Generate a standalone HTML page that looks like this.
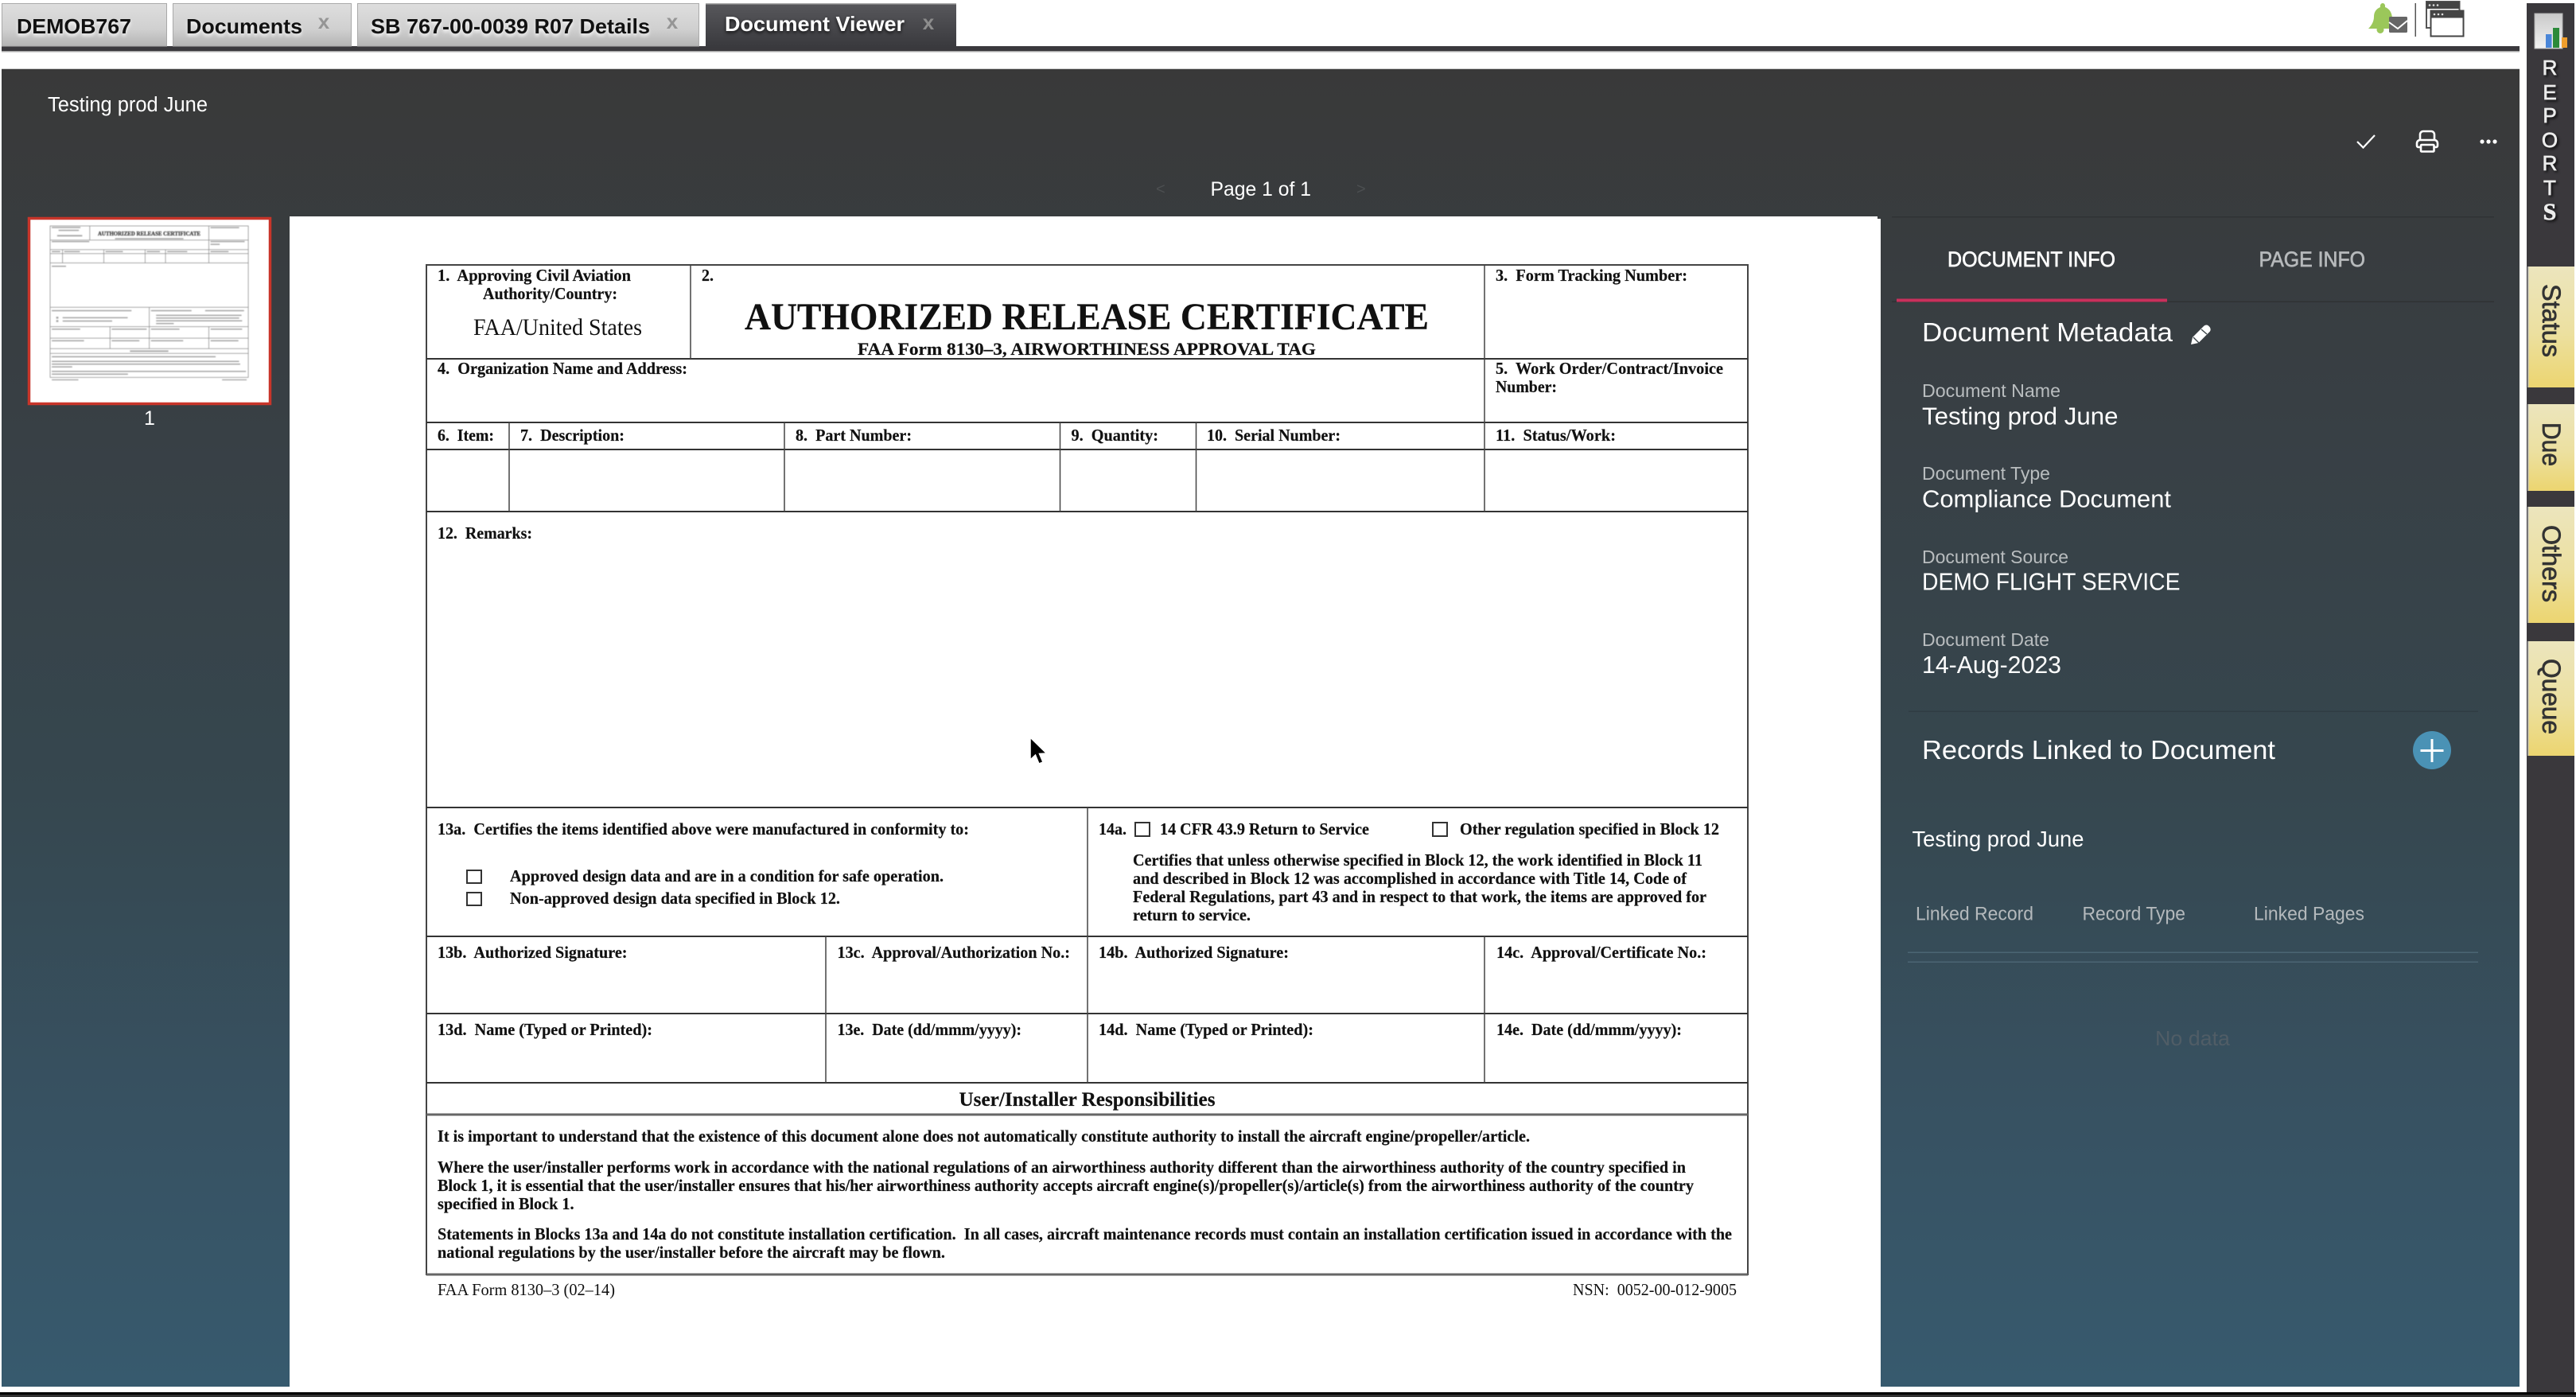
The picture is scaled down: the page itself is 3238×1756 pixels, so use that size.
<!DOCTYPE html>
<html lang="en">
<head>
<meta charset="utf-8">
<title>Document Viewer</title>
<style>
html,body{margin:0;padding:0;background:#fff;width:3238px;height:1756px;overflow:hidden}
svg{display:block;position:absolute;left:0;top:0}
.s{font-family:"Liberation Sans",Arial,sans-serif}
.f text{font-family:"Liberation Serif","Times New Roman",serif;font-weight:bold;font-size:21px;fill:#111;stroke:#111;stroke-width:.2px;white-space:pre}
.f .n{font-weight:normal;stroke-width:0}
.p text{font-family:"Liberation Sans",Arial,sans-serif;fill:#fff}
.l{font-size:23.5px;fill:#b9bdbf !important}
.v{font-size:31px}
.h{font-size:24.5px;fill:#b4b9bc !important}
</style>
</head>
<body>
<svg width="3238" height="1756" viewBox="0 0 3238 1756" xmlns="http://www.w3.org/2000/svg">
<defs>
<linearGradient id="bg" x1="0" y1="87" x2="0" y2="1743" gradientUnits="userSpaceOnUse">
<stop offset="0" stop-color="#393939"/>
<stop offset=".25" stop-color="#383f44"/>
<stop offset=".55" stop-color="#36474f"/>
<stop offset=".78" stop-color="#375161"/>
<stop offset="1" stop-color="#375a6e"/>
</linearGradient>
<linearGradient id="ti" x1="0" y1="0" x2="0" y2="1"><stop offset="0" stop-color="#dedede"/><stop offset=".6" stop-color="#d0d0d0"/><stop offset="1" stop-color="#b4b4b4"/></linearGradient>
<linearGradient id="ta" x1="0" y1="0" x2="0" y2="1"><stop offset="0" stop-color="#58585c"/><stop offset="1" stop-color="#39393d"/></linearGradient>
<linearGradient id="y" x1="0" y1="0" x2="0" y2="1"><stop offset="0" stop-color="#ece5bd"/><stop offset=".55" stop-color="#ece0a0"/><stop offset="1" stop-color="#ecd570"/></linearGradient>
<linearGradient id="cb" x1="0" y1="0" x2="0" y2="1"><stop offset="0" stop-color="#c9c9c9"/><stop offset="1" stop-color="#f2f2f2"/></linearGradient>
<filter id="blur" x="-5%" y="-5%" width="110%" height="110%"><feGaussianBlur stdDeviation=".65"/></filter>
</defs>

<!-- top tabs -->
<rect x="2" y="58" width="3165" height="6" fill="#3a393d"/>
<rect x="2" y="64" width="3165" height="1.5" fill="#a8a8a8"/>
<g stroke="#a9a9a9" stroke-width="1">
<rect x="2.5" y="4.5" width="207" height="53.5" fill="url(#ti)"/>
<rect x="217.5" y="4.5" width="224" height="53.5" fill="url(#ti)"/>
<rect x="449.5" y="4.5" width="429" height="53.5" fill="url(#ti)"/>
</g>
<rect x="887" y="4" width="315" height="56" fill="url(#ta)"/>
<rect x="887" y="4" width="315" height="1.5" fill="#a9a9a9"/>
<g class="s" font-weight="bold" font-size="26" fill="#111" style="filter:drop-shadow(0 3px 2px rgba(255,255,255,.85))">
<text x="21" y="42" textLength="144" lengthAdjust="spacingAndGlyphs">DEMOB767</text>
<text x="234" y="42" textLength="146" lengthAdjust="spacingAndGlyphs">Documents</text>
<text x="466" y="42" textLength="351" lengthAdjust="spacingAndGlyphs">SB 767-00-0039 R07 Details</text>
</g>
<text class="s" x="911" y="39" font-weight="bold" font-size="26" fill="#fff" textLength="226" lengthAdjust="spacingAndGlyphs" style="filter:drop-shadow(0 2px 2px rgba(0,0,0,.8))">Document Viewer</text>
<g class="s" font-weight="bold" font-size="26" fill="#959595" text-anchor="middle">
<text x="407" y="36">x</text>
<text x="845" y="36">x</text>
<text x="1167" y="37" fill="#8d8d8d">x</text>
</g>

<!-- top right icons -->
<path d="M2995 4c2 0 3.500 2 3 5 6 2 9 8 9 15v12h-30c4-4 7-9 7-15 0-6 3-10 8-12-.5-3 1-5 3-5z" fill="#9bc75a"/>
<circle cx="2992" cy="37.500" r="4.500" fill="#9bc75a"/>
<rect x="3003" y="21" width="23" height="20" rx="1.5" fill="#666"/>
<path d="M3003 28l11 8 12-10" fill="none" stroke="#fff" stroke-width="2"/>
<rect x="3035.5" y="4" width="1.5" height="42" fill="#555"/>
<rect x="3050" y="2" width="41.5" height="33" fill="#fff" stroke="#555" stroke-width="2"/>
<rect x="3050" y="2" width="41.5" height="9" fill="#444"/>
<rect x="3055.5" y="13.5" width="41" height="32" fill="#fff" stroke="#444" stroke-width="2"/>
<rect x="3055.5" y="13.5" width="41" height="9" fill="#444"/>
<g fill="#ddd"><circle cx="3054" cy="6.5" r="1.3"/><circle cx="3059" cy="6.5" r="1.3"/><circle cx="3064" cy="6.5" r="1.3"/><circle cx="3060" cy="18" r="1.3"/><circle cx="3065" cy="18" r="1.3"/><circle cx="3070" cy="18" r="1.3"/></g>

<!-- main panel -->
<rect x="2" y="86" width="3165" height="1" fill="#c8c8c8"/>
<rect x="2" y="87" width="3165" height="1656" fill="url(#bg)"/>
<rect x="364" y="272" width="1996" height="1478" fill="#fff"/>
<rect x="364" y="275" width="2000" height="1475" fill="#fff"/>
<rect x="2" y="1743" width="362" height="7" fill="#fff"/>
<rect x="2378" y="272" width="757" height="1.5" fill="#2f3234"/>
<rect x="2378" y="378.5" width="757" height="1.5" fill="#2f3234"/>
<rect x="2384" y="375.5" width="340" height="4" fill="#c9305c"/>

<g class="p">
<text x="60" y="140" font-size="25.500" textLength="201" lengthAdjust="spacingAndGlyphs">Testing prod June</text>
<text x="1521.500" y="246" font-size="25" textLength="126.500" lengthAdjust="spacingAndGlyphs">Page 1 of 1</text>
<text x="1453" y="244" font-size="20" style="fill:#4c4f51">&lt;</text>
<text x="1705" y="244" font-size="20" style="fill:#4c4f51">&gt;</text>
<text x="188" y="534" font-size="25" text-anchor="middle">1</text>
</g>

<!-- toolbar icons -->
<path d="M2963 178l7.5 7.5L2985 170" fill="none" stroke="#fff" stroke-width="2.2"/>
<g fill="none" stroke="#fff" stroke-width="2.6">
<path d="M3042 176v-7a4 4 0 0 1 4-4h10a4 4 0 0 1 4 4v7"/>
<path d="M3042 185h-2a2 2 0 0 1-2-2v-3a4 4 0 0 1 4-4h18a4 4 0 0 1 4 4v3a2 2 0 0 1-2 2h-2"/>
<rect x="3043" y="182" width="16.5" height="8.5" rx="1"/>
</g>
<g fill="#fff"><circle cx="3120" cy="178" r="2.600"/><circle cx="3128" cy="178" r="2.600"/><circle cx="3136" cy="178" r="2.600"/></g>

<!-- right sidebar -->
<rect x="3176" y="4" width="60" height="1746" fill="#3a383c"/>
<rect x="3186" y="17" width="35" height="44" fill="url(#cb)" stroke="#b0b0b0" stroke-width="1"/>
<rect x="3200" y="43" width="7.5" height="17" fill="#4a86d8"/>
<rect x="3209" y="35" width="8" height="25" fill="#2c8a3a"/>
<rect x="3220" y="47" width="7" height="13" fill="#ef9d2c"/>
<g class="s" font-size="26" fill="#ececec" stroke="#ececec" stroke-width=".7" text-anchor="middle" style="filter:drop-shadow(2px 2px 1.5px rgba(0,0,0,.75))">
<text x="3205" y="94">R</text>
<text x="3205" y="125">E</text>
<text x="3205" y="154">P</text>
<text x="3205" y="185">O</text>
<text x="3205" y="214">R</text>
<text x="3205" y="245">T</text>
<text x="3205" y="276" font-weight="bold" style="font-family:'Liberation Serif',serif" font-size="30">S</text>
</g>
<g>
<rect x="3177" y="335" width="59" height="152" fill="url(#y)"/>
<rect x="3177" y="508" width="59" height="109" fill="url(#y)"/>
<rect x="3177" y="637" width="59" height="146" fill="url(#y)"/>
<rect x="3177" y="806" width="59" height="144" fill="url(#y)"/>
<rect x="3177" y="335" width="1.5" height="152" fill="#aaa"/>
<rect x="3177" y="508" width="1.5" height="109" fill="#aaa"/>
<rect x="3177" y="637" width="1.5" height="146" fill="#aaa"/>
<rect x="3177" y="806" width="1.5" height="144" fill="#aaa"/>
</g>
<g class="s" font-size="32" fill="#333" stroke="#333" stroke-width=".7">
<text x="3196" y="357" transform="rotate(90 3196 357)" textLength="92" lengthAdjust="spacingAndGlyphs">Status</text>
<text x="3196" y="531" transform="rotate(90 3196 531)" textLength="55" lengthAdjust="spacingAndGlyphs">Due</text>
<text x="3196" y="660" transform="rotate(90 3196 660)" textLength="97" lengthAdjust="spacingAndGlyphs">Others</text>
<text x="3196" y="828" transform="rotate(90 3196 828)" textLength="95" lengthAdjust="spacingAndGlyphs">Queue</text>
</g>

<!-- thumbnail -->
<rect x="36.5" y="274.5" width="303" height="233" fill="#fff" stroke="#c8352a" stroke-width="3.5"/>
<g filter="url(#blur)">
<g transform="translate(63 284) scale(.15) translate(-536 -333)" fill="none" stroke="#8a8a8a" stroke-width="5">
<rect x="536" y="333" width="1661" height="1269"/>
<path d="M536 451H2197M536 531H2197M536 565H2197M536 643H2197M536 1015H2197M536 1177H2197M536 1274H2197M536 1361H2197M536 1401H2197M868 333V451M1866 333V643M640 531V643M986 531V643M1332 531V643M1503 531V643M1367 1015V1361M1038 1177V1361M1866 1177V1361"/>
<g stroke="none" fill="#a4a4a4">
<rect x="550" y="341" width="240" height="10"/><rect x="607" y="365" width="170" height="10"/><rect x="595" y="409" width="210" height="12"/>
<rect x="550" y="459" width="314" height="10"/><rect x="1880" y="342" width="240" height="10"/><rect x="1880" y="459" width="286" height="10"/><rect x="1880" y="482" width="77" height="10"/>
<rect x="550" y="543" width="71" height="10"/><rect x="654" y="543" width="131" height="10"/><rect x="1000" y="543" width="146" height="10"/><rect x="1346" y="543" width="110" height="10"/><rect x="1517" y="543" width="168" height="10"/><rect x="1880" y="543" width="151" height="10"/>
<rect x="550" y="666" width="119" height="10"/><rect x="550" y="1038" width="668" height="10"/><rect x="641" y="1097" width="545" height="10"/><rect x="641" y="1125" width="415" height="10"/><rect x="587" y="1094" width="18" height="16"/><rect x="587" y="1122" width="18" height="16"/>
<rect x="1381" y="1038" width="340" height="10"/><rect x="1835" y="1038" width="326" height="10"/><rect x="1424" y="1077" width="716" height="10"/><rect x="1424" y="1100" width="696" height="10"/><rect x="1424" y="1123" width="721" height="10"/><rect x="1424" y="1146" width="148" height="10"/>
<rect x="550" y="1193" width="238" height="10"/><rect x="1052" y="1193" width="293" height="10"/><rect x="1381" y="1193" width="239" height="10"/><rect x="1881" y="1193" width="264" height="10"/>
<rect x="550" y="1290" width="270" height="10"/><rect x="1052" y="1290" width="232" height="10"/><rect x="1381" y="1290" width="270" height="10"/><rect x="1881" y="1290" width="233" height="10"/>
<rect x="1205" y="1376" width="322" height="12"/><rect x="550" y="1424" width="1373" height="10"/><rect x="550" y="1463" width="1569" height="10"/><rect x="550" y="1486" width="1579" height="10"/><rect x="550" y="1509" width="171" height="10"/><rect x="550" y="1547" width="1627" height="10"/><rect x="550" y="1570" width="638" height="10"/><rect x="550" y="1618" width="223" height="9"/><rect x="1977" y="1618" width="206" height="9"/>
<rect x="1080" y="435" width="573" height="10"/>
</g>
<text x="936" y="414" font-family="Liberation Serif,serif" font-weight="bold" font-size="48" fill="#444" stroke="#444" stroke-width="2" textLength="860" lengthAdjust="spacingAndGlyphs">AUTHORIZED RELEASE CERTIFICATE</text>
</g>
</g>

<!-- form lines -->
<g fill="none" stroke="#333" stroke-width="2">
<rect x="536" y="333" width="1661" height="1269" stroke="#444"/>
<path d="M536 451H2197M536 531H2197M536 565H2197M536 643H2197M536 1015H2197M536 1177H2197M536 1274H2197M536 1361H2197"/>
<path d="M536 1401H2197M536 1602H2197" stroke="#666" stroke-width="3"/>
<path d="M868 333V451M1866 333V643M640 531V643M986 531V643M1332.5 531V643M1503.5 531V643M1367 1015V1361M1038 1177V1361M1866 1177V1361" stroke="#444" stroke-width="1.5"/>
</g>
<g fill="none" stroke="#333" stroke-width="2">
<rect x="587" y="1094" width="18" height="16"/>
<rect x="587" y="1122" width="18" height="16"/>
<rect x="1427" y="1034" width="18" height="17"/>
<rect x="1801" y="1034" width="18" height="17"/>
</g>

<!-- form text -->
<g class="f" xml:space="preserve">
<text x="550" y="353" textLength="243" lengthAdjust="spacingAndGlyphs">1.  Approving Civil Aviation</text>
<text x="607" y="376" textLength="169" lengthAdjust="spacingAndGlyphs">Authority/Country:</text>
<text class="n" x="595" y="421" style="font-size:30px" textLength="212" lengthAdjust="spacingAndGlyphs">FAA/United States</text>
<text x="882" y="353" textLength="15" lengthAdjust="spacingAndGlyphs">2.</text>
<text x="936" y="414" style="font-size:48px" textLength="860" lengthAdjust="spacingAndGlyphs">AUTHORIZED RELEASE CERTIFICATE</text>
<text x="1078" y="446" style="font-size:22px" textLength="576" lengthAdjust="spacingAndGlyphs">FAA Form 8130–3, AIRWORTHINESS APPROVAL TAG</text>
<text x="1880" y="353" textLength="241" lengthAdjust="spacingAndGlyphs">3.  Form Tracking Number:</text>
<text x="550" y="470" textLength="314" lengthAdjust="spacingAndGlyphs">4.  Organization Name and Address:</text>
<text x="1880" y="470" textLength="286" lengthAdjust="spacingAndGlyphs">5.  Work Order/Contract/Invoice</text>
<text x="1880" y="493" textLength="77" lengthAdjust="spacingAndGlyphs">Number:</text>
<text x="550" y="554" textLength="71" lengthAdjust="spacingAndGlyphs">6.  Item:</text>
<text x="654" y="554" textLength="131" lengthAdjust="spacingAndGlyphs">7.  Description:</text>
<text x="1000" y="554" textLength="146" lengthAdjust="spacingAndGlyphs">8.  Part Number:</text>
<text x="1346.5" y="554" textLength="109.5" lengthAdjust="spacingAndGlyphs">9.  Quantity:</text>
<text x="1517" y="554" textLength="168" lengthAdjust="spacingAndGlyphs">10.  Serial Number:</text>
<text x="1880" y="554" textLength="151" lengthAdjust="spacingAndGlyphs">11.  Status/Work:</text>
<text x="550" y="677" textLength="119" lengthAdjust="spacingAndGlyphs">12.  Remarks:</text>
<text x="550" y="1049" textLength="668" lengthAdjust="spacingAndGlyphs">13a.  Certifies the items identified above were manufactured in conformity to:</text>
<text x="641" y="1108" textLength="545" lengthAdjust="spacingAndGlyphs">Approved design data and are in a condition for safe operation.</text>
<text x="641" y="1136" textLength="415" lengthAdjust="spacingAndGlyphs">Non-approved design data specified in Block 12.</text>
<text x="1381" y="1049" textLength="35" lengthAdjust="spacingAndGlyphs">14a.</text>
<text x="1458" y="1049" textLength="263" lengthAdjust="spacingAndGlyphs">14 CFR 43.9 Return to Service</text>
<text x="1835" y="1049" textLength="326" lengthAdjust="spacingAndGlyphs">Other regulation specified in Block 12</text>
<text x="1424" y="1088" textLength="716" lengthAdjust="spacingAndGlyphs">Certifies that unless otherwise specified in Block 12, the work identified in Block 11</text>
<text x="1424" y="1111" textLength="696" lengthAdjust="spacingAndGlyphs">and described in Block 12 was accomplished in accordance with Title 14, Code of</text>
<text x="1424" y="1134" textLength="721" lengthAdjust="spacingAndGlyphs">Federal Regulations, part 43 and in respect to that work, the items are approved for</text>
<text x="1424" y="1157" textLength="148" lengthAdjust="spacingAndGlyphs">return to service.</text>
<text x="550" y="1204" textLength="238.5" lengthAdjust="spacingAndGlyphs">13b.  Authorized Signature:</text>
<text x="1052.5" y="1204" textLength="292.5" lengthAdjust="spacingAndGlyphs">13c.  Approval/Authorization No.:</text>
<text x="1381" y="1204" textLength="239" lengthAdjust="spacingAndGlyphs">14b.  Authorized Signature:</text>
<text x="1881" y="1204" textLength="264" lengthAdjust="spacingAndGlyphs">14c.  Approval/Certificate No.:</text>
<text x="550" y="1301" textLength="270" lengthAdjust="spacingAndGlyphs">13d.  Name (Typed or Printed):</text>
<text x="1052.5" y="1301" textLength="231.5" lengthAdjust="spacingAndGlyphs">13e.  Date (dd/mmm/yyyy):</text>
<text x="1381" y="1301" textLength="270" lengthAdjust="spacingAndGlyphs">14d.  Name (Typed or Printed):</text>
<text x="1881" y="1301" textLength="233" lengthAdjust="spacingAndGlyphs">14e.  Date (dd/mmm/yyyy):</text>
<text x="1205.5" y="1390" style="font-size:25px" textLength="322" lengthAdjust="spacingAndGlyphs">User/Installer Responsibilities</text>
<text x="550" y="1435" textLength="1373" lengthAdjust="spacingAndGlyphs">It is important to understand that the existence of this document alone does not automatically constitute authority to install the aircraft engine/propeller/article.</text>
<text x="550" y="1474" textLength="1569" lengthAdjust="spacingAndGlyphs">Where the user/installer performs work in accordance with the national regulations of an airworthiness authority different than the airworthiness authority of the country specified in</text>
<text x="550" y="1497" textLength="1579" lengthAdjust="spacingAndGlyphs">Block 1, it is essential that the user/installer ensures that his/her airworthiness authority accepts aircraft engine(s)/propeller(s)/article(s) from the airworthiness authority of the country</text>
<text x="550" y="1520" textLength="171.5" lengthAdjust="spacingAndGlyphs">specified in Block 1.</text>
<text x="550" y="1558" textLength="1627" lengthAdjust="spacingAndGlyphs">Statements in Blocks 13a and 14a do not constitute installation certification.  In all cases, aircraft maintenance records must contain an installation certification issued in accordance with the</text>
<text x="550" y="1581" textLength="638" lengthAdjust="spacingAndGlyphs">national regulations by the user/installer before the aircraft may be flown.</text>
<text class="n" x="550" y="1628" textLength="223" lengthAdjust="spacingAndGlyphs">FAA Form 8130–3 (02–14)</text>
<text class="n" x="1977" y="1628" textLength="206" lengthAdjust="spacingAndGlyphs">NSN:  0052-00-012-9005</text>
</g>

<!-- cursor -->
<path d="M1295 927v28l6.5-6 4.5 11 5-2-4.5-10.5 9-.5z" fill="#000" stroke="#fff" stroke-width="1.5"/>

<!-- right panel -->
<g class="p">
<text x="2448" y="335" font-size="26.500" stroke="#fff" stroke-width=".7" textLength="211" lengthAdjust="spacingAndGlyphs">DOCUMENT INFO</text>
<text x="2839.500" y="335" font-size="26.500" stroke="#b6b9bb" stroke-width=".7" style="fill:#b6b9bb" textLength="133.500" lengthAdjust="spacingAndGlyphs">PAGE INFO</text>
<text x="2416" y="429" font-size="33" textLength="315" lengthAdjust="spacingAndGlyphs">Document Metadata</text>
<text class="l" x="2416" y="499" textLength="174" lengthAdjust="spacingAndGlyphs">Document Name</text>
<text class="v" x="2416" y="533.500" textLength="246.500" lengthAdjust="spacingAndGlyphs">Testing prod June</text>
<text class="l" x="2416" y="603" textLength="161" lengthAdjust="spacingAndGlyphs">Document Type</text>
<text class="v" x="2416" y="637.500" textLength="313" lengthAdjust="spacingAndGlyphs">Compliance Document</text>
<text class="l" x="2416" y="708" textLength="184" lengthAdjust="spacingAndGlyphs">Document Source</text>
<text class="v" x="2416" y="741.500" textLength="324.500" lengthAdjust="spacingAndGlyphs">DEMO FLIGHT SERVICE</text>
<text class="l" x="2416" y="812" textLength="160" lengthAdjust="spacingAndGlyphs">Document Date</text>
<text class="v" x="2416" y="846" textLength="175" lengthAdjust="spacingAndGlyphs">14-Aug-2023</text>
<text x="2416" y="954" font-size="33" textLength="444" lengthAdjust="spacingAndGlyphs">Records Linked to Document</text>
<text x="2403.500" y="1064" font-size="27.500" textLength="216" lengthAdjust="spacingAndGlyphs">Testing prod June</text>
<text class="h" x="2408" y="1156.500" textLength="148" lengthAdjust="spacingAndGlyphs">Linked Record</text>
<text class="h" x="2617.500" y="1156.500" textLength="129.500" lengthAdjust="spacingAndGlyphs">Record Type</text>
<text class="h" x="2833" y="1156.500" textLength="139" lengthAdjust="spacingAndGlyphs">Linked Pages</text>
<text x="2709" y="1314" font-size="26" style="fill:#505d66" textLength="94" lengthAdjust="spacingAndGlyphs">No data</text>
</g>
<path d="M2754 433l2-9 14-14c2-2 5-2 6.500 0l1 1c1.500 2 1.500 4.500 0 6l-14 14z" fill="#fff"/>
<path d="M2757 424l7 7M2767 414l7 6" stroke="#3a4347" stroke-width="1.400" fill="none"/>
<rect x="2399" y="893.500" width="716" height="1.500" fill="#2f3c43"/>
<circle cx="3057" cy="943" r="24" fill="#4a92b5"/>
<path d="M3042.500 943.500h29M3057 929v29" stroke="#fff" stroke-width="3" fill="none"/>
<rect x="2398" y="1196.500" width="717" height="1.500" fill="#4b6573"/>
<rect x="2398" y="1208.500" width="717" height="1.500" fill="#4b6573"/>

<!-- bottom edge -->
<rect x="0" y="1750" width="3238" height="3" fill="#000"/>
<rect x="0" y="1753" width="3238" height="3" fill="#333"/>
</svg>
</body>
</html>
